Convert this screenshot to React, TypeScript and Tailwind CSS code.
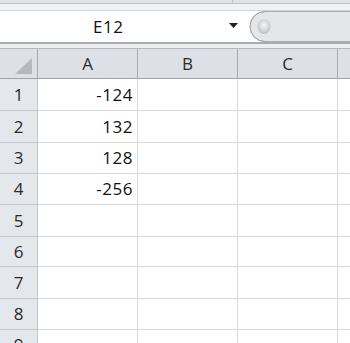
import React from "react";

const rows: { n: string; a: string; h: string }[] = [
  { n: "1", a: "-124", h: "h-[32px]" },
  { n: "2", a: "132", h: "h-[32px]" },
  { n: "3", a: "128", h: "h-[31px]" },
  { n: "4", a: "-256", h: "h-[31px]" },
  { n: "5", a: "", h: "h-[32px]" },
  { n: "6", a: "", h: "h-[30px]" },
  { n: "7", a: "", h: "h-[32px]" },
  { n: "8", a: "", h: "h-[31px]" },
  { n: "9", a: "", h: "h-[31px]" },
];

export default function App() {
  return (
    <div
      className="w-[350px] h-[343px] overflow-hidden bg-white text-[17px] font-medium text-[#111]"
      style={{ fontFamily: '"Open Sans", "Noto Sans", sans-serif' }}
    >
      {/* top toolbar remnant */}
      <div className="flex h-[3px] bg-[#dfe2e7]">
        <div className="w-[233px] border-r border-[#c3c7cc]" />
        <div className="flex-1" />
      </div>
      <div className="h-px bg-[#bfc3c8]" />
      <div className="h-[6px] bg-[#f1f2f4]" />
      <div className="h-px bg-[#cfd3d8]" />
      {/* name box row */}
      <div className="flex h-[31px]">
        <div className="relative flex w-[249px] items-center bg-white">
          <span className="ml-[93px] tracking-[0.5px] text-[#111]">E12</span>
          <svg className="absolute left-[229px] top-[12px]" width="9" height="6" viewBox="0 0 9 6">
            <path d="M0 0 H9 L4.5 5 Z" fill="#222" />
          </svg>
        </div>
        <div className="relative flex-1 bg-[#dde0e5]">
          <svg className="absolute left-0 top-0" width="101" height="31" viewBox="0 0 101 31">
            <defs>
              <radialGradient id="dot" cx="50%" cy="40%" r="60%">
                <stop offset="0%" stopColor="#f4f5f6" />
                <stop offset="60%" stopColor="#d4d6d9" />
                <stop offset="100%" stopColor="#b9bcc0" />
              </radialGradient>
            </defs>
            <path d="M101 0.5 H16 A15 15 0 0 0 16 30.5 H101" fill="#e4e6ea" stroke="#a8acb2" strokeWidth="1" />
            <path d="M0 0 H16 A15.5 15.5 0 0 0 16 31 H0 Z" fill="#ffffff" />
            <path d="M16 0.5 A15 15 0 0 0 16 30.5" fill="none" stroke="#a3a7ad" strokeWidth="1" />
            <ellipse cx="15" cy="15.5" rx="6.5" ry="7.5" fill="url(#dot)" />
          </svg>
        </div>
      </div>
      <div className="h-[2px] bg-[#a9adb3]" />
      <div className="h-[4px] bg-[#eceef1]" />
      <div className="h-px bg-[#b3b7bd]" />
      {/* column headers */}
      <div className="flex h-[30px] border-b border-[#9ea3a9] bg-[#dde1e7] text-[#2a2a2a]">
        <div className="relative w-[38px] shrink-0 border-r border-[#a5aab0]">
          <svg className="absolute left-[15px] top-[9px]" width="17" height="16" viewBox="0 0 17 16">
            <path d="M17 0 V16 H0 Z" fill="#b5b9be" />
          </svg>
        </div>
        {["A", "B", "C"].map((c) => (
          <div
            key={c}
            className="flex w-[100px] shrink-0 items-center justify-center border-r border-[#a5aab0]"
          >
            {c}
          </div>
        ))}
        <div className="flex-1" />
      </div>
      {/* rows */}
      {rows.map((r) => (
        <div key={r.n} className={`flex ${r.h}`}>
          <div className="flex w-[38px] shrink-0 items-center justify-center border-r border-b border-[#c3c7cd] bg-[#e4e7ec] text-[#2a2a2a]">
            {r.n}
          </div>
          <div className="flex w-[100px] shrink-0 items-center justify-end border-r border-b border-[#dadada] pr-[4px] tracking-[0.5px]">
            {r.a}
          </div>
          <div className="w-[100px] shrink-0 border-r border-b border-[#dadada]" />
          <div className="w-[100px] shrink-0 border-r border-b border-[#dadada]" />
          <div className="flex-1 border-b border-[#dadada]" />
        </div>
      ))}
    </div>
  );
}
